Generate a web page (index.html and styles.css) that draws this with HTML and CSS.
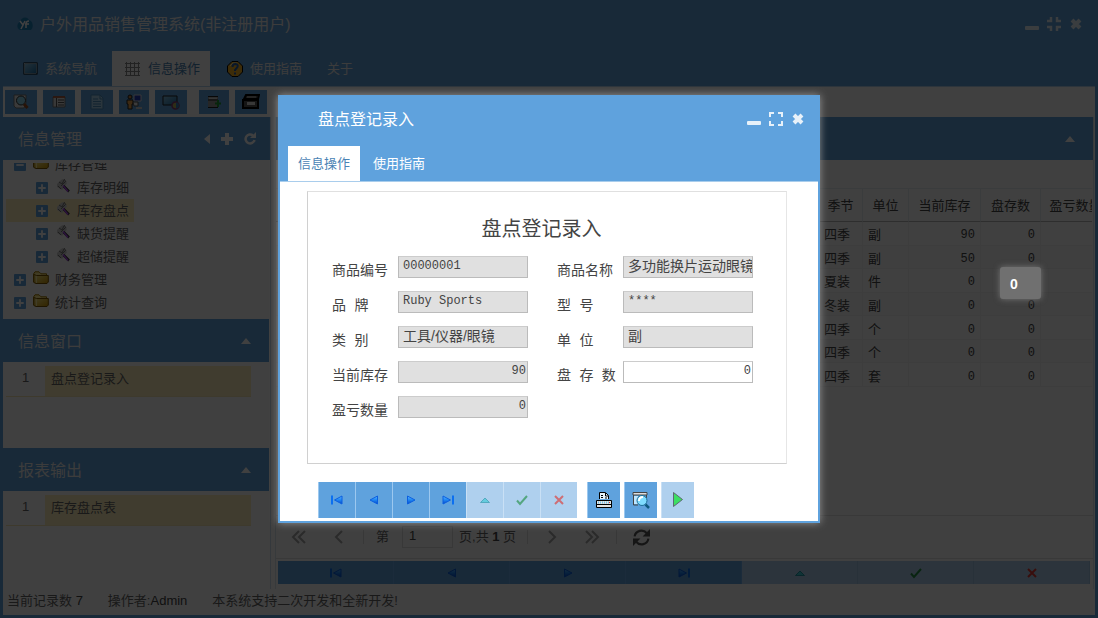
FILE: index.html
```html
<!DOCTYPE html>
<html lang="zh-CN">
<head>
<meta charset="utf-8">
<meta name="viewport" content="width=device-width, initial-scale=1">
<title>户外用品销售管理系统</title>
<link rel="stylesheet" href="styles.css">
</head>
<body>
<svg class="defs" aria-hidden="true">
  <defs>
    <linearGradient id="gfold" x1="0" y1="0" x2="1" y2="1"><stop offset="0" stop-color="#fff08c"/><stop offset="1" stop-color="#c99500"/></linearGradient>
    <linearGradient id="gscr" x1="0" y1="0" x2="1" y2="1"><stop offset="0" stop-color="#8cc4e4"/><stop offset="1" stop-color="#1c6fa8"/></linearGradient>
    <linearGradient id="gtri" x1="0" y1="0" x2="0" y2="1"><stop offset="0" stop-color="#5cb6ff"/><stop offset=".5" stop-color="#1c86f4"/><stop offset="1" stop-color="#0b49c4"/></linearGradient>
  </defs>
  <symbol id="up" viewBox="0 0 12 6"><path d="M1 6 6 0l5 6z" fill="#fff"/></symbol>
  <symbol id="minus" viewBox="0 0 14 16"><rect y="10" width="14" height="4" rx="1" fill="#fff"/></symbol>
  <symbol id="cross" viewBox="0 0 14 16"><path d="M3 4l8 8M11 4l-8 8" stroke="#fff" stroke-width="4"/></symbol>
  <symbol id="expand" viewBox="0 0 16 16"><path d="M6 2H2v4M10 2h4v4M6 14H2v-4M10 14h4v-4" fill="none" stroke="#fff" stroke-width="2"/></symbol>
  <symbol id="shrink" viewBox="0 0 16 16"><path d="M5 1v4H1M11 1v4h4M5 15v-4H1M11 15v-4h4" fill="none" stroke="#fff" stroke-width="2.500"/></symbol>
  <symbol id="box" viewBox="0 0 13 13"><rect width="13" height="13" rx="1" fill="#5fa2dd"/><path d="M2.500 6.500h8M6.500 2.500v8" stroke="#fff" stroke-width="2"/></symbol>
  <symbol id="boxm" viewBox="0 0 13 13"><rect width="13" height="13" rx="1" fill="#5fa2dd"/><path d="M2.500 6.500h8" stroke="#fff" stroke-width="2"/></symbol>
  <symbol id="folder" viewBox="0 0 16 14"><path d="M.5 11V3L2 .8h4l2 2h5.500V5" fill="#ffe98a" stroke="#a07800"/><path d="M.8 11.500L3 12.500h11l1.300-1.500V4.500H3.500L1 3.500z" fill="url(#gfold)" stroke="#7a5600"/><path d="M3.500 5v7" stroke="#fff0a0"/></symbol>
  <symbol id="tool" viewBox="0 0 16 16"><path d="M2 6l4-4 2-1 4 4-5 7-5-3z" fill="#d0d0d0"/><path d="M4 4l3 2 2-4M6 8l4-4M3 8l3 3M9 1l2 3" stroke="#777" fill="none"/><path d="M8.500 8l5.500 5.500" stroke="#333" stroke-width="2.500"/><path d="M8 7.500l5 6" stroke="#b04cf0" stroke-width="1.500"/></symbol>
  <symbol id="prev" viewBox="0 0 12 12"><path d="M9.500 2v8L2 6z" fill="url(#gtri)" stroke="#0b5fe0"/></symbol>
  <symbol id="next" viewBox="0 0 12 12"><path d="M2.500 2v8L10 6z" fill="url(#gtri)" stroke="#0b5fe0"/></symbol>
  <symbol id="first" viewBox="0 0 14 12"><path d="M2 1.500v9" stroke="#0b6ff0" stroke-width="2"/><path d="M12 2v8L4.500 6z" fill="url(#gtri)" stroke="#0b5fe0"/></symbol>
  <symbol id="last" viewBox="0 0 14 12"><path d="M12 1.500v9" stroke="#0b6ff0" stroke-width="2"/><path d="M2 2v8L9.500 6z" fill="url(#gtri)" stroke="#0b5fe0"/></symbol>
  <symbol id="edit" viewBox="0 0 12 12"><path d="M1.500 8.500h9L6 4z" fill="#3ecbd6" stroke="#2496a8"/></symbol>
  <symbol id="ok" viewBox="0 0 12 12"><path d="M1 6.500l3 3.500 7-8" fill="none" stroke="#259046" stroke-width="2"/></symbol>
  <symbol id="no" viewBox="0 0 12 12"><path d="M2 2l8 8M10 2l-8 8" stroke="#e03a34" stroke-width="2"/></symbol>
  <symbol id="preview" viewBox="0 0 18 18"><path d="M1 1.500h14v2.500H1z" fill="#ddd" stroke="#444"/><path d="M1.500 4v10H6M14.500 4v3" fill="none" stroke="#444"/><path d="M2 5h4v8H2z" fill="#bfe6ff"/><circle cx="10" cy="9.500" r="5" fill="#7fdcff" stroke="#1d6f98"/><path d="M7 10q0-4 4-4" stroke="#fff" stroke-width="2" fill="none"/><path d="M13.500 13.500l3.500 3.500" stroke="#0e5a80" stroke-width="2.500"/></symbol>
</svg>

<div class="app">
  <header class="top">
    <div class="titlebar">
      <svg class="logo" viewBox="0 0 16 14"><path d="M3 13C-1 11 0 6 3 5c1-5 7-6 9-2 4 1 5 7 2 10z" fill="#1f84bd"/><path d="M3 4l3 4 2-4M6 8l-2 4M9 11V7q0-3 3-3M8 7h4" fill="none" stroke="#fff" stroke-width="1.500"/></svg>
      <h1>户外用品销售管理系统(非注册用户)</h1>
      <div class="winctl">
        <button aria-label="最小化"><svg width="14" height="16"><use href="#minus"/></svg></button>
        <button aria-label="还原"><svg width="16" height="16"><use href="#shrink"/></svg></button>
        <button aria-label="关闭"><svg width="14" height="16"><use href="#cross"/></svg></button>
      </div>
    </div>
    <nav class="tabs">
      <a href="#nav"><svg width="15" height="13" viewBox="0 0 15 13"><rect x=".5" y=".5" width="14" height="12" fill="#000"/><rect x="1.500" y="1.500" width="12" height="10" fill="url(#gscr)" stroke="#e0f0fa" stroke-width=".5"/></svg>系统导航</a>
      <a href="#ops" class="on"><svg width="16" height="16" viewBox="0 0 16 16"><path d="M2.500 1v14M6.500 1v14M10.500 1v14M14.500 1v14M1 2.500h15M1 6.500h15M1 10.500h15M1 14.500h15" stroke="#888"/></svg>信息操作</a>
      <a href="#guide"><svg width="16" height="16" viewBox="0 0 16 16"><path d="M5 .5h6L15.500 5v6L11 15.500H5L.5 11V5z" fill="#f3b022" stroke="#000"/><path d="M3 5l3-3h4" stroke="#ffe9a0" fill="none"/><path d="M5.500 6q0-3 3-3 3 .5 2 3L8 9v1M8 11.500v2" fill="none" stroke="#245ca8" stroke-width="2"/></svg>使用指南</a>
      <a href="#about">关于</a>
    </nav>
  </header>

  <div class="toolbar">
    <button aria-label="查找"><svg viewBox="0 0 18 18"><path d="M2 2h12v8l-2 5H4l-2-2z" fill="#e8e8e8" stroke="#777"/><circle cx="9" cy="7.500" r="4.500" fill="#8fd6ee" stroke="#333"/><path d="M12 11l3.500 4" stroke="#9a4c20" stroke-width="3"/></svg></button>
    <button aria-label="列表"><svg viewBox="0 0 18 18"><path d="M3 4h12v10H3z" fill="#ddd" stroke="#777"/><path d="M3 4h12" stroke="#b84c22" stroke-width="1.500"/><path d="M6.500 5v9M8 7h6M8 9.500h6M8 12h6" stroke="#555"/></svg></button>
    <button aria-label="文档"><svg viewBox="0 0 18 18"><path d="M3 2h9l3 3v11H3z" fill="#a7d3ef" stroke="#4c8fc0"/><path d="M12 2v4h3M5 6h5M5 8.500h8M5 11h8M5 13.500h8" fill="none" stroke="#4c8fc0"/></svg></button>
    <button class="narrow" aria-label="用户"><svg viewBox="0 0 18 18"><circle cx="5" cy="4" r="2" fill="#c08040" stroke="#222"/><path d="M2 7h6v4H7v5H3v-5H2z" fill="#f0a54c" stroke="#222"/><path d="M9 2h7v6H9z" fill="#263dbd" stroke="#ddd"/><path d="M8 9h5v4H9z" fill="#eee" stroke="#555"/><path d="M11 15h6" stroke="#ccc" stroke-width="2"/></svg></button>
    <button aria-label="监视"><svg viewBox="0 0 18 18"><path d="M1 3h14v9H1z" fill="url(#gscr)" stroke="#222"/><circle cx="13.500" cy="12.500" r="3.500" fill="#b8b45b" stroke="#8a3c75" stroke-width="1.500"/><path d="M14 9.500a3 3 0 010 6z" fill="#3881bb"/></svg></button>
    <button class="narrow gap" aria-label="新增"><svg viewBox="0 0 18 18"><path d="M3 4h10v11H3z" fill="#999"/><path d="M3 3.500h10M3 7h10M3 14.500h10" stroke="#222"/><path d="M4 5.200h8" stroke="#eee"/><path d="M13 7v7M10 10.500h6" stroke="#1f9635" stroke-width="2"/></svg></button>
    <button aria-label="打印"><svg viewBox="0 0 18 18"><path d="M4 2h13l-1 4H2zM1 7h15v8H1z" fill="#555" stroke="#000" stroke-width="2"/><path d="M5 4h9" stroke="#ccc"/><path d="M5 9h8v3H5z" fill="#ddd"/></svg></button>
  </div>

  <div class="work">
    <aside class="side">
      <section>
        <div class="phead first"><h2>信息管理</h2>
          <svg width="6" height="12" viewBox="0 0 6 12"><path d="M6 1v10L0 6z" fill="#fff"/></svg>
          <svg width="12" height="12" viewBox="0 0 12 12"><path d="M6 0v12M0 6h12" stroke="#fff" stroke-width="4"/></svg>
          <svg width="12" height="13" viewBox="0 0 12 13"><path d="M9 3.500A4.500 4.500 0 1010.500 8" fill="none" stroke="#fff" stroke-width="2.500"/><path d="M12 0v6H6z" fill="#fff"/></svg>
        </div>
        <div class="tree">
          <ul>
            <li><svg class="bx"><use href="#boxm"/></svg><svg class="fd"><use href="#folder"/></svg>库存管理</li>
            <li class="kid"><svg class="bx"><use href="#box"/></svg><svg class="tl"><use href="#tool"/></svg>库存明细</li>
            <li class="kid sel"><svg class="bx"><use href="#box"/></svg><svg class="tl"><use href="#tool"/></svg>库存盘点</li>
            <li class="kid"><svg class="bx"><use href="#box"/></svg><svg class="tl"><use href="#tool"/></svg>缺货提醒</li>
            <li class="kid"><svg class="bx"><use href="#box"/></svg><svg class="tl"><use href="#tool"/></svg>超储提醒</li>
            <li><svg class="bx"><use href="#box"/></svg><svg class="fd"><use href="#folder"/></svg>财务管理</li>
            <li><svg class="bx"><use href="#box"/></svg><svg class="fd"><use href="#folder"/></svg>统计查询</li>
          </ul>
        </div>
      </section>
      <section class="small">
        <div class="phead"><h2>信息窗口</h2><svg width="12" height="6"><use href="#up"/></svg></div>
        <div class="item"><span>1</span><p>盘点登记录入</p></div>
      </section>
      <section class="small">
        <div class="phead"><h2>报表输出</h2><svg width="12" height="6"><use href="#up"/></svg></div>
        <div class="item"><span>1</span><p>库存盘点表</p></div>
      </section>
    </aside>

    <main class="main">
      <div class="phead"><h2></h2><svg width="12" height="6"><use href="#up"/></svg></div>
      <div class="gridwrap">
        <table>
          <colgroup><col><col class="c1"><col class="c2"><col class="c3"><col class="c4"><col class="c5"></colgroup>
          <thead><tr><th></th><th>季节</th><th>单位</th><th>当前库存</th><th>盘存数</th><th>盈亏数量</th></tr></thead>
          <tbody>
            <tr><td></td><td>四季</td><td>副</td><td class="n">90</td><td class="n">0</td><td></td></tr>
            <tr><td></td><td>四季</td><td>副</td><td class="n">50</td><td class="n">0</td><td></td></tr>
            <tr><td></td><td>夏装</td><td>件</td><td class="n">0</td><td class="n"></td><td></td></tr>
            <tr><td></td><td>冬装</td><td>副</td><td class="n">0</td><td class="n">0</td><td></td></tr>
            <tr><td></td><td>四季</td><td>个</td><td class="n">0</td><td class="n">0</td><td></td></tr>
            <tr><td></td><td>四季</td><td>个</td><td class="n">0</td><td class="n">0</td><td></td></tr>
            <tr><td></td><td>四季</td><td>套</td><td class="n">0</td><td class="n">0</td><td></td></tr>
          </tbody>
        </table>
      </div>
      <div class="pager">
        <button aria-label="首页"><svg viewBox="0 0 16 16"><path d="M8 2L2 8l6 6M14 2L8 8l6 6"/></svg></button>
        <button aria-label="上一页"><svg viewBox="0 0 16 16"><path d="M11 2L5 8l6 6"/></svg></button>
        <i></i>
        <label for="pg">第</label><input id="pg" value="1"><span>页,共 <b>1</b> 页</span>
        <i></i>
        <button aria-label="下一页"><svg viewBox="0 0 16 16"><path d="M5 2l6 6-6 6"/></svg></button>
        <button aria-label="末页"><svg viewBox="0 0 16 16"><path d="M2 2l6 6-6 6M8 2l6 6-6 6"/></svg></button>
        <i></i>
        <button aria-label="刷新"><svg class="rf" viewBox="0 0 16 16"><path d="M1.500 7A6.500 6.500 0 0113 4M14.500 9A6.500 6.500 0 013 12"/><path class="f" d="M16 0v7H9zM0 16V9h7z"/></svg></button>
      </div>
      <div class="navbar">
        <button aria-label="首条"><svg><use href="#first"/></svg></button>
        <button aria-label="上条"><svg><use href="#prev"/></svg></button>
        <button aria-label="下条"><svg><use href="#next"/></svg></button>
        <button aria-label="末条"><svg><use href="#last"/></svg></button>
        <button disabled aria-label="编辑"><svg><use href="#edit"/></svg></button>
        <button disabled aria-label="保存"><svg><use href="#ok"/></svg></button>
        <button disabled aria-label="取消"><svg><use href="#no"/></svg></button>
      </div>
    </main>
  </div>
  <footer class="status"><span>当前记录数 <b>7</b></span><span>操作者:<b>Admin</b></span><span>本系统支持二次开发和全新开发!</span></footer>
</div>

<div class="mask"></div>
<div class="tip">0</div>

<div class="dialog" role="dialog" aria-labelledby="dt">
  <div class="dtitle">
    <h2 id="dt">盘点登记录入</h2>
    <div class="winctl">
      <button aria-label="最小化"><svg width="14" height="16"><use href="#minus"/></svg></button>
      <button aria-label="最大化"><svg width="16" height="16"><use href="#expand"/></svg></button>
      <button aria-label="关闭"><svg width="14" height="16"><use href="#cross"/></svg></button>
    </div>
  </div>
  <nav class="dtabs"><a href="#dops" class="on">信息操作</a><a href="#dguide">使用指南</a></nav>
  <form class="sheet">
    <h3>盘点登记录入</h3>
    <div class="fields">
      <label for="f1">商品编号</label><input id="f1" class="lat" readonly value="00000001">
      <label for="f2">商品名称</label><input id="f2" readonly value="多功能换片运动眼镜">
      <label for="f3">品 牌</label><input id="f3" class="lat" readonly value="Ruby Sports">
      <label for="f4">型 号</label><input id="f4" class="lat" readonly value="****">
      <label for="f5">类 别</label><input id="f5" readonly value="工具/仪器/眼镜">
      <label for="f6">单 位</label><input id="f6" readonly value="副">
      <label for="f7">当前库存</label><input id="f7" class="lat num" readonly value="90">
      <label for="f8">盘 存 数</label><input id="f8" class="lat num" value="0">
      <label for="f9">盈亏数量</label><input id="f9" class="lat num" readonly value="0">
    </div>
  </form>
  <div class="dbar">
    <div class="grp">
      <button aria-label="首条"><svg><use href="#first"/></svg></button>
      <button aria-label="上条"><svg><use href="#prev"/></svg></button>
      <button aria-label="下条"><svg><use href="#next"/></svg></button>
      <button aria-label="末条"><svg><use href="#last"/></svg></button>
      <button disabled aria-label="编辑"><svg><use href="#edit"/></svg></button>
      <button disabled aria-label="保存"><svg><use href="#ok"/></svg></button>
      <button disabled aria-label="取消"><svg><use href="#no"/></svg></button>
    </div>
    <button class="big" aria-label="打印"><svg viewBox="0 0 18 18"><path d="M4.500 8V1.500h6l3 3V8" fill="#e8f4fc" stroke="#000"/><path d="M6 4.500h2M6 6.500h2M10.500 2v3h3M10 7h2" fill="none" stroke="#000"/><path d="M1.500 9.500h15v7h-15z" fill="#e4e4e4" stroke="#000"/><path d="M3 11.500h11" stroke="#6fc0e8" stroke-width="2" stroke-dasharray="1 1"/><path d="M1.500 13.500h15" stroke="#000"/><path d="M14 11.500h1" stroke="#d22"/></svg></button>
    <button class="big" aria-label="预览"><svg><use href="#preview"/></svg></button>
    <button class="big" disabled aria-label="执行"><svg viewBox="0 0 18 18"><path d="M4.500 1.500v14l9-7z" fill="#00e818" stroke="#333"/></svg></button>
  </div>
</div>
</body>
</html>
```

FILE: styles.css
```css
* { box-sizing: border-box; }
body {
  margin: 0;
  font: 13px/20px "Liberation Sans", "Noto Sans CJK SC", sans-serif;
  color: #666;
  background: #fff;
  position: relative;
}
h1, h2, h3, p, ul { margin: 0; padding: 0; font-weight: 400; }
button { border: 0; padding: 0; margin: 0; background: none; display: flex; align-items: center; justify-content: center; }
a { color: inherit; text-decoration: none; }
svg { display: block; flex: none; }
.defs { position: absolute; width: 0; height: 0; }

/* main window */
.app {
  min-height: 100vh;
  display: flex;
  flex-direction: column;
  border: solid #5fa2dd;
  border-width: 0 3px 3px;
}
.top { background: #5fa2dd; color: #eee; }
.titlebar { height: 51px; display: flex; align-items: center; padding: 0 12px 4px 14px; }
.logo { width: 16px; height: 14px; margin-right: 7px; }
h1 { font-size: 16px; line-height: 20px; padding-top: 2px; flex: 1; }
.winctl { display: flex; gap: 7px; opacity: .85; }
.tabs { display: flex; height: 35px; padding-left: 10px; }
.tabs a { display: flex; align-items: center; gap: 7px; padding: 0 10px; }
.tabs a + a { margin-left: 5px; }
.tabs a.on { background: #fff; color: #4a83b5; padding: 0 10px 0 12px; gap: 8px; }
.tabs a:nth-child(3) { padding-left: 12px; }

.toolbar { height: 31px; padding: 3px 2px 3px; display: flex; gap: 6px; border-top: 1px solid #b5d4ef; }
.toolbar button { width: 32px; height: 24px; background: #5fa2dd; }
.toolbar .narrow { width: 30px; }
.toolbar .gap { margin-left: 6px; }
.toolbar svg { width: 18px; height: 18px; }

.work { flex: 1; display: grid; grid-template-columns: 268px minmax(0, 1fr); gap: 4px; }
.side { border-right: 1px solid #cfe0ef; }
.phead { height: 43px; padding: 0 17px 0 15px; display: flex; align-items: center; gap: 12px; background: #5fa2dd; color: #eee; }
.phead h2 { flex: 1; font-size: 16px; padding-top: 2px; }
.first { padding-right: 14px; gap: 11px; }
.tree { height: 159px; padding: 3px; }
.tree ul { list-style: none; height: 153px; overflow: hidden; }
.tree li { height: 23px; width: 128px; display: flex; align-items: center; padding-left: 8px; }
.tree li:first-child { margin-top: -10px; }
.tree .kid { padding-left: 30px; }
.tree .sel { background: #ffefbb; }
.bx { width: 12px; height: 12px; margin-right: 7px; }
.fd { width: 16px; height: 14px; margin: 0 6px 4px 0; }
.tl { width: 16px; height: 16px; margin: 0 6px 3px 0; }
.small { height: 129px; margin-right: 1px; }
.item { margin: 4px 18px 0 3px; height: 31px; display: flex; border-bottom: 1px solid #f5e8b4; }
.item span { width: 39px; text-align: center; line-height: 24px; }
.item p { flex: 1; background: #ffefbb; padding-left: 6px; line-height: 26px; }

.main { display: flex; flex-direction: column; min-width: 0; margin-right: 1px; border: solid #dce6ef; border-width: 0 1px; }
.gridwrap { flex: 1; padding-top: 28px; overflow: hidden; margin-right: 1px; }
table { width: calc(100% + 19px); table-layout: fixed; border-collapse: separate; border-spacing: 0; color: #444; }
.c1 { width: 44px; }
.c2 { width: 46px; }
.c3 { width: 72px; }
.c4 { width: 60px; }
.c5 { width: 70px; }
th { height: 34px; padding: 1px 0 0; font-weight: 400; white-space: nowrap; border: solid #e6edf3; border-width: 1px 1px 1px 0; border-bottom-color: #b8b8b8; }
tbody { height: 165px; }
td { height: 23px; padding: 3px 6px 0 5px; line-height: 19px; border: solid #f2f2f2; border-width: 0 1px 1px 0; }
tbody tr:nth-child(even) td { background: #fafafa; }
.n { text-align: right; font-family: "Liberation Mono", monospace; font-size: 12px; }
tbody .n { padding: 5px 5px 0; line-height: 17px; }

.pager { height: 44px; border: solid #e2e2e2; border-width: 1px 0; display: flex; align-items: center; }
.pager button { width: 24px; height: 24px; margin: 0 8px; opacity: .5; }
.pager > button:first-child { margin-left: 11px; }
.pager svg { width: 16px; height: 16px; fill: none; stroke: #555; stroke-width: 2; }
.pager .rf { width: 17px; height: 17px; }
.pager .rf .f { fill: #555; stroke: none; }
.pager button:last-child { opacity: 1; }
.pager i { width: 1px; height: 14px; background: #ddd; margin: 0 4px; }
.pager label { margin: 0 13px 0 8px; }
.pager input { width: 51px; height: 22px; border: 1px solid #ddd; padding: 0 6px 4px; font: 13px "Liberation Sans", sans-serif; color: #444; }
.pager span { margin: 0 7px 0 6px; }
.pager b, .status b { color: #444; }
.navbar { display: grid; grid-template-columns: repeat(7, 1fr); height: 23px; margin: 2px 3px 5px 2px; }
.navbar button { background: #5fa2dd; border-right: 1px solid #6badea; }
.navbar button:disabled { background: #afd0ee; border-color: #9fc4e4; }
.navbar svg { width: 14px; height: 12px; }
.status { height: 26px; padding: 0 4px 2px; display: flex; align-items: center; gap: 25px; }
.status b { font-weight: 400; }

/* dimming layer and popups */
.mask { position: absolute; inset: 0; background: rgba(0, 0, 0, .75); }
.tip {
  position: absolute; left: 1000px; top: 267px; width: 41px; height: 32px;
  padding-left: 10px; border-radius: 3px; background: #707070; color: #fff;
  font: bold 14px/34px "Liberation Sans", sans-serif; box-shadow: 0 0 6px #777;
}

.dialog {
  position: absolute; left: 278px; top: 95px; width: 542px;
  background: #fff; border: 2px solid #5fa2dd; border-top-width: 1px;
  box-shadow: 0 0 8px rgba(170, 170, 170, .8);
}
.dtitle { height: 50px; padding: 0 13px 4px 38px; display: flex; align-items: center; background: #5fa2dd; color: #fff; }
.dtitle h2 { flex: 1; font-size: 16px; padding-top: 2px; }
.dtabs { display: flex; height: 36px; padding-left: 8px; background: #5fa2dd; color: #fff; border-bottom: 1px solid #a9cdec; }
.dtabs a { padding: 0 10px; line-height: 36px; }
.dtabs a.on { background: #fff; color: #4a83b5; }
.dtabs a + a { margin-left: 3px; }
.sheet { margin: 9px 31px 0 27px; height: 273px; border: 1px solid #d0d0d0; border-right-color: #e6e6e6; border-top-color: #e0e0e0; padding: 25px 35px 0 24px; color: #444; }
.sheet h3 { font-size: 20px; line-height: 24px; text-align: center; margin-bottom: 15px; }
.fields { display: grid; grid-template-columns: 66px 159px 66px 130px; row-gap: 13px; justify-content: start; }
.fields label { font: 14px/30px "Liberation Mono", "Noto Sans CJK SC", monospace; height: 22px; white-space: nowrap; }
.fields input { width: 130px; height: 22px; border: 1px solid #bbb; border-top-color: #ccc; background: #e0e0e0; padding: 0 0 4px 4px; font: 14px/16px "Liberation Sans", "Noto Sans CJK SC", sans-serif; color: #444; }
.fields .lat { font: 12px "Liberation Mono", monospace; padding-bottom: 3px; }
.fields .num { text-align: right; padding-right: 1px; }
.fields input:not([readonly]) { background: #fff; }
.dbar { display: flex; gap: 4px; padding: 18px 0 3px 38px; }
.grp { display: flex; margin-right: 6px; }
.dbar button { width: 37px; height: 36px; background: #5fa2dd; border-left: 1px solid #9cc8ef; }
.dbar button:disabled { background: #afd0ee; border-color: #c9e0f5; }
.dbar button:disabled svg { opacity: .65; }
.dbar svg { width: 14px; height: 12px; }
.dbar .big { width: 33px; }
.dbar .big svg { width: 18px; height: 18px; }
```
